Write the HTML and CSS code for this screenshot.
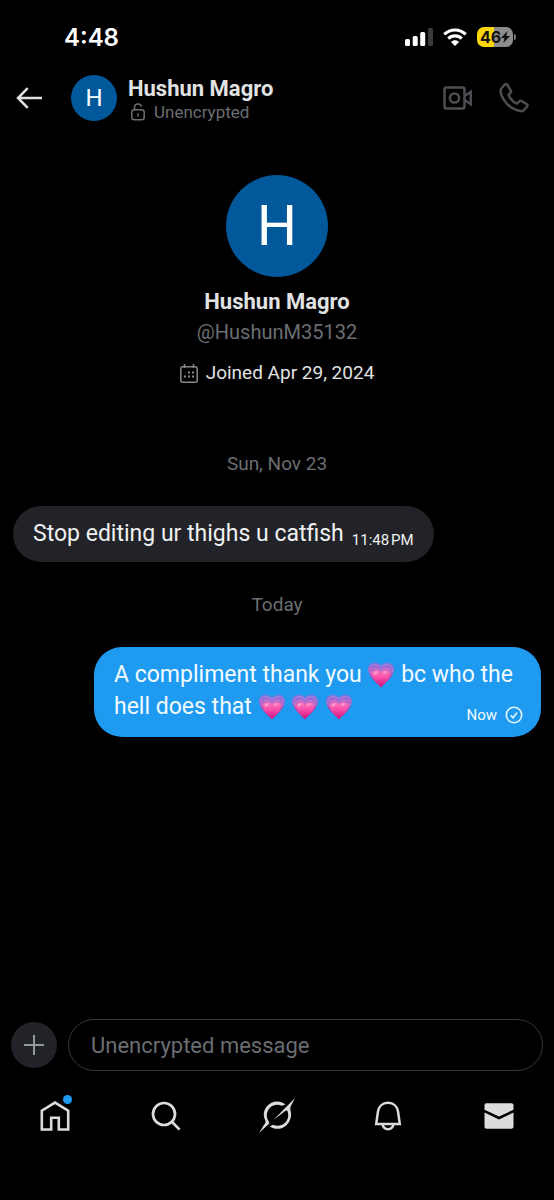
FILE: index.html
```
<!DOCTYPE html>
<html lang="en">
<head>
<meta charset="utf-8">
<meta name="viewport" content="width=device-width, initial-scale=1">
<title>Hushun Magro</title>
<link rel="stylesheet" href="styles.css">
</head>
<body>
<svg class="defs" width="0" height="0" aria-hidden="true">
  <defs>
    <linearGradient id="ring" x1="0" y1="0" x2="0" y2="1">
      <stop offset="0" stop-color="#8179dd"/><stop offset=".5" stop-color="#a455c0"/><stop offset="1" stop-color="#c8207f"/>
    </linearGradient>
    <linearGradient id="ring2" x1="0" y1="0" x2="0" y2="1">
      <stop offset="0" stop-color="#a868d2"/><stop offset="1" stop-color="#d12c8d"/>
    </linearGradient>
    <linearGradient id="core" x1="0" y1="0" x2="0" y2="1">
      <stop offset="0" stop-color="#ff7dbf"/><stop offset=".5" stop-color="#f64aa8"/><stop offset="1" stop-color="#d3167f"/>
    </linearGradient>
    <symbol id="heart" viewBox="0 0 26 26">
      <path fill="url(#ring)" d="M13 25.5C8 20.500 0 14 0 7.300 0 3 3 .7 6.600.7 9.500.7 11.800 1.800 13 4 14.200 1.800 16.500.7 19.400.7 23 .7 26 3 26 7.300 26 14 18 20.500 13 25.500z"/>
      <path fill="none" stroke="#cd93e6" stroke-width=".6" d="M2 11C.8 5.500 3.200 2.800 6.800 2.800c2.800 0 5 1.200 6.200 3.600 1.200-2.400 3.400-3.600 6.200-3.600 3.600 0 6 2.700 5 8.200"/>
      <path fill="url(#ring2)" d="M13 24.800C9 20.500 2.200 15.500 2.200 10 2.200 6.400 4.500 4.600 7.200 4.600 9.800 4.600 12 5.800 13 8 14 5.800 16.200 4.600 18.800 4.600 21.500 4.600 23.800 6.400 23.800 10 23.800 15.500 17 20.500 13 24.800z"/>
      <path fill="none" stroke="#e29edc" stroke-width=".6" d="M3.600 12.500C2.600 8.500 4.700 6.600 7.600 6.600c2.400 0 4.300 1 5.400 3 1.100-2 3-3 5.400-3 2.900 0 5 1.900 4 5.900"/>
      <path fill="url(#core)" d="M13 24.200C9.500 20.700 4 17 4 12.600 4 9.700 5.900 8.200 8.200 8.200 10.400 8.200 12.200 9.200 13 11 13.800 9.200 15.600 8.200 17.800 8.200 20.100 8.200 22 9.700 22 12.600 22 17 16.500 20.700 13 24.200z"/>
      <ellipse cx="7.500" cy="11" rx="2.100" ry="1.300" fill="#ffb3dc" opacity=".7" transform="rotate(-35 7.500 11)"/>
      <ellipse cx="17" cy="10.600" rx="2" ry="1.100" fill="#ffb3dc" opacity=".6" transform="rotate(-25 17 10.600)"/>
    </symbol>
  </defs>
</svg>
<div class="app">
  <div class="status">
    <time class="clock">4:48</time>
    <div class="indicators">
      <svg width="28" height="18" viewBox="0 0 28 18" fill="#fff" aria-label="Signal">
        <rect x="0" y="11" width="5" height="7" rx="1.500"/><rect x="7.700" y="8" width="5" height="10" rx="1.500"/><rect x="15.200" y="4" width="5" height="14" rx="1.500"/><rect x="23" y="0" width="5" height="18" rx="1.500" fill="#3a3a3a"/>
      </svg>
      <svg width="24" height="18" viewBox="0 0 24 18" fill="none" stroke="#fff" stroke-width="3.200" aria-label="Wi-Fi">
        <path d="M1.300 6.400C7.200.5 16.800.5 22.700 6.400"/><path d="M5.300 10.700c3.700-3.700 9.700-3.700 13.400 0"/><path fill="#fff" stroke="none" d="M12 18l-4-4.100c2.200-2.100 5.800-2.100 8 0z"/>
      </svg>
      <div class="battery">
        <span class="battery-body">46<svg width="9" height="12" viewBox="0 0 9 12" fill="#111"><path d="M6.500 0L0 7h3.500L2.300 12 9 5H5.300z"/></svg></span>
        <span class="battery-tip"></span>
      </div>
    </div>
  </div>

  <header class="topbar">
    <button class="icon-btn" aria-label="Back">
      <svg width="26" height="22" viewBox="0 0 26 22" fill="none" stroke="#e0e1e2" stroke-width="2.500"><path d="M26 11H2M11.700 1.200L2 11l9.700 9.800"/></svg>
    </button>
    <span class="avatar small">H</span>
    <div class="who">
      <h1 class="name">Hushun Magro</h1>
      <p class="lockline">
        <svg width="14" height="18" viewBox="0 0 14 18" fill="none" stroke="#6b6e72" stroke-width="1.500"><rect x=".8" y="6.800" width="12.400" height="10" rx="2.500"/><path d="M3.500 6.800V4.500C3.500 2.300 5 1 7 1c1.800 0 3 1 3.400 2.600M7 10.200v3.300"/></svg>
        Unencrypted
      </p>
    </div>
    <div class="calls">
      <button class="icon-btn" aria-label="Video call">
        <svg width="30" height="24" viewBox="0 0 30 24" fill="none" stroke="#4c4e51" stroke-width="2.500"><rect x="1.500" y="1.500" width="20" height="21" rx="2"/><circle cx="11.500" cy="12" r="4.600"/><path d="M21.500 10l6.200-4.200v12.400L21.500 14"/></svg>
      </button>
      <button class="icon-btn" aria-label="Voice call">
        <svg width="30" height="30" viewBox="0 0 30 30" fill="none" stroke="#4c4e51" stroke-width="2.500" stroke-linejoin="round"><path d="M8.300 1.800L11.800 7.600c.4.800.3 1.500-.2 2L9.400 12c1.800 3.700 4.800 6.900 8.700 8.700l2.400-2.500c.5-.5 1.200-.6 1.900-.2l5.400 3.200c.8.500 1 1.500.4 2.200l-3.200 3.600c-.8.900-2.200 1.400-3.500 1.100C11.500 26.200 3.600 18.500 1.700 9.300 1.400 7.700 1.700 6.100 2.700 5L5.800 1.600c.8-.8 1.900-.7 2.500.2z"/></svg>
      </button>
    </div>
  </header>

  <main class="chat">
    <section class="profile">
      <span class="avatar large">H</span>
      <h2 class="name">Hushun Magro</h2>
      <p class="handle">@HushunM35132</p>
      <p class="joined">
        <svg width="18" height="19" viewBox="0 0 18 19" fill="none" stroke="#85888c" stroke-width="1.500"><rect x=".8" y="2.800" width="16.400" height="15.400" rx="2"/><path d="M4.500 0v4M13.500 0v4"/><path stroke-width="2" stroke-dasharray="2 2" d="M8 8.500h6.500M4 12.500h10"/></svg>
        Joined Apr 29, 2024
      </p>
    </section>
    <p class="day">Sun, Nov 23</p>
    <div class="bubble received">
      <p>Stop editing ur thighs u catfish</p>
      <time class="stamp">11:48&#8239;PM</time>
    </div>
    <p class="day">Today</p>
    <div class="bubble sent">
      <p>A compliment thank you <svg class="emoji" role="img" aria-label="growing heart"><use href="#heart"/></svg> bc who the hell does that <svg class="emoji" role="img" aria-label="growing heart"><use href="#heart"/></svg> <svg class="emoji" role="img" aria-label="growing heart"><use href="#heart"/></svg> <svg class="emoji" role="img" aria-label="growing heart"><use href="#heart"/></svg>
        <span class="stamp">Now
          <svg width="18" height="18" viewBox="0 0 18 18" fill="none" stroke="#e8f5fe" stroke-width="1.600"><circle cx="9" cy="9" r="7.700"/><path d="M5.700 9.400l2.300 2.300 4-5.300"/></svg>
        </span>
      </p>
    </div>
  </main>

  <form class="composer">
    <button class="plus" type="button" aria-label="Add">
      <svg width="20" height="20" viewBox="0 0 20 20" stroke="#94979b" stroke-width="2"><path d="M10 0v20M0 10h20"/></svg>
    </button>
    <input class="field" type="text" placeholder="Unencrypted message" aria-label="Unencrypted message">
  </form>

  <nav class="tabs">
    <a href="#" class="tab" aria-label="Home">
      <span class="home">
        <svg width="30" height="30" viewBox="0 0 30 30" fill="none" stroke="#dcdcdc" stroke-width="2.600"><path d="M1.800 28.500V9.700L15 1.600l13.200 8.100v18.800h-9.400V16.800h-7.600v11.700z"/></svg>
        <span class="dot"></span>
      </span>
    </a>
    <a href="#" class="tab" aria-label="Search">
      <svg width="30" height="30" viewBox="0 0 30 30" fill="none" stroke="#dcdcdc" stroke-width="2.700"><circle cx="13" cy="13" r="11"/><path d="M20.800 20.800l7.800 7.800"/></svg>
    </a>
    <a href="#" class="tab" aria-label="Grok">
      <svg width="36" height="36" viewBox="0 0 36 36" fill="#dcdcdc"><path d="M26.500 6.500C22.500 3.300 16.800 2.600 12 5 5.500 8.300 3 15.800 6.200 22.200c.8 1.600.3 2.800-1 4.300L0 35l9-8.300c1.300-1.200 1.800-2 .8-3.300C6.800 19.200 7.200 13.300 11.200 9.600c3.100-2.900 7.700-3.700 11.600-1.800z"/><path d="M36 0L14.300 22.100l12.300-9.300c.8-.6 1.600-.3 1.900.5 1.500 3.900.7 8.400-2.400 11.400-3.300 3.200-8 3.900-12 2l-3.300 1.800c5 3.300 12 3.300 16.700-1.300 4.200-4 5.400-9.600 4.100-14.400-.7-2.900-.1-4 1.100-6.400z"/></svg>
    </a>
    <a href="#" class="tab" aria-label="Notifications">
      <svg width="28" height="30" viewBox="0 0 28 30" fill="none" stroke="#dcdcdc" stroke-width="2.500"><path d="M2.200 23L3.900 11C4.600 5.500 8.500 1.800 14 1.800S23.400 5.500 24.100 11l1.700 12z"/><path d="M8.500 23.500c.8 3 2.800 4.700 5.500 4.700s4.700-1.700 5.500-4.700"/></svg>
    </a>
    <a href="#" class="tab" aria-label="Messages">
      <svg width="30" height="26" viewBox="0 0 30 26" fill="#dcdcdc"><path d="M.5 2.200c0-1.200.8-2 2-2h25c1.200 0 2 .8 2 2v4.600L15 13.400.5 6.800z"/><path d="M.5 9.600L15 16.600l14.500-7v14c0 1.300-.7 2.100-2 2.100h-25c-1.300 0-2-.8-2-2.100z"/></svg>
    </a>
  </nav>
</div>
</body>
</html>
```
FILE: styles.css
```
* { box-sizing: border-box; }
body {
  margin: 0;
  background: #000;
  color: #e1e2e3;
  font-family: Roboto, "Liberation Sans", sans-serif;
}
h1, h2, p { margin: 0; }
button { border: 0; padding: 0; font: inherit; color: inherit; }
svg { flex: none; }
.defs { position: absolute; }
.app { display: flex; flex-direction: column; min-height: 100vh; }

.status {
  display: flex;
  align-items: center;
  justify-content: space-between;
  height: 74px;
  padding: 0 38px 0 64px;
  font-family: Inter, "Liberation Sans", sans-serif;
}
.clock { color: #fff; font-size: 24px; font-weight: 600; }
.indicators { display: flex; align-items: center; gap: 10px; }
.battery { display: flex; align-items: center; gap: 1px; }
.battery-body {
  display: flex;
  align-items: center;
  justify-content: center;
  width: 36px;
  height: 20px;
  border-radius: 7px;
  background: linear-gradient(90deg, #fdd709 46%, #8b8b8b 46%);
  color: #111;
  font-size: 16px;
  font-weight: 700;
}
.battery-tip { width: 2px; height: 6px; border-radius: 0 2px 2px 0; background: #777; }

.topbar { display: flex; align-items: center; height: 48px; padding: 0 25px 0 16px; }
.icon-btn { display: flex; background: none; }
.avatar {
  display: flex;
  align-items: center;
  justify-content: center;
  flex: none;
  border-radius: 50%;
  background: #01589b;
  color: #fff;
}
.small { width: 46px; height: 46px; margin-left: 29px; font-size: 24px; }
.large { width: 102px; height: 102px; font-size: 56px; }
.who { flex: 1; margin-left: 11px; padding-top: 2px; }
.name { font-size: 22px; line-height: 26px; font-weight: 700; }
.lockline {
  display: flex;
  align-items: center;
  gap: 9px;
  padding-left: 3px;
  color: #6b6e72;
  font-size: 17px;
  line-height: 20px;
}
.calls { display: flex; align-items: center; gap: 26px; }

.chat { flex: 1; display: flex; flex-direction: column; padding: 53px 13px 0; }
.profile { display: flex; flex-direction: column; align-items: center; }
.profile .name { margin-top: 12px; }
.handle { margin-top: 4px; color: #6b6e72; font-size: 20px; line-height: 26px; }
.joined {
  display: flex;
  align-items: center;
  gap: 8px;
  margin-top: 14px;
  font-size: 19px;
  line-height: 28px;
}
.day {
  margin: 64px 0 29px;
  color: #6b6e72;
  font-size: 19px;
  line-height: 26px;
  text-align: center;
}
.bubble { border-radius: 28px; padding: 12px 18px 12px 20px; font-size: 23px; line-height: 32px; }
.received {
  display: flex;
  align-items: flex-end;
  align-self: flex-start;
  gap: 8px;
  padding-right: 20px;
  background: #212328;
  color: #f0f1f2;
}
.received + .day { margin-top: 30px; }
.stamp { font-size: 15px; line-height: 20px; }
.sent { align-self: flex-end; max-width: calc(100% - 81px); background: #1e9bf1; color: #f2faff; }
.emoji { width: 26px; height: 26px; margin: 0 1px; vertical-align: -6px; }
.sent .stamp { float: right; display: flex; align-items: center; gap: 8px; margin-top: 14px; }

.composer { display: flex; align-items: center; gap: 11px; padding: 0 11px; }
.plus {
  display: flex;
  align-items: center;
  justify-content: center;
  flex: none;
  width: 46px;
  height: 46px;
  border-radius: 50%;
  background: #212328;
}
.field {
  flex: 1;
  min-width: 0;
  height: 52px;
  padding: 0 22px;
  border: 1px solid #343638;
  border-radius: 26px;
  background: transparent;
  color: #e1e2e3;
  font: inherit;
  font-size: 22px;
}
.field::placeholder { color: #6b6e72; opacity: 1; }

.tabs { display: flex; align-items: center; height: 90px; margin-bottom: 39px; }
.tab { display: flex; flex: 1; justify-content: center; }
.home { display: flex; position: relative; }
.dot {
  position: absolute;
  top: -6px;
  right: -2px;
  width: 9px;
  height: 9px;
  border-radius: 50%;
  background: #1e9bf1;
}
```
